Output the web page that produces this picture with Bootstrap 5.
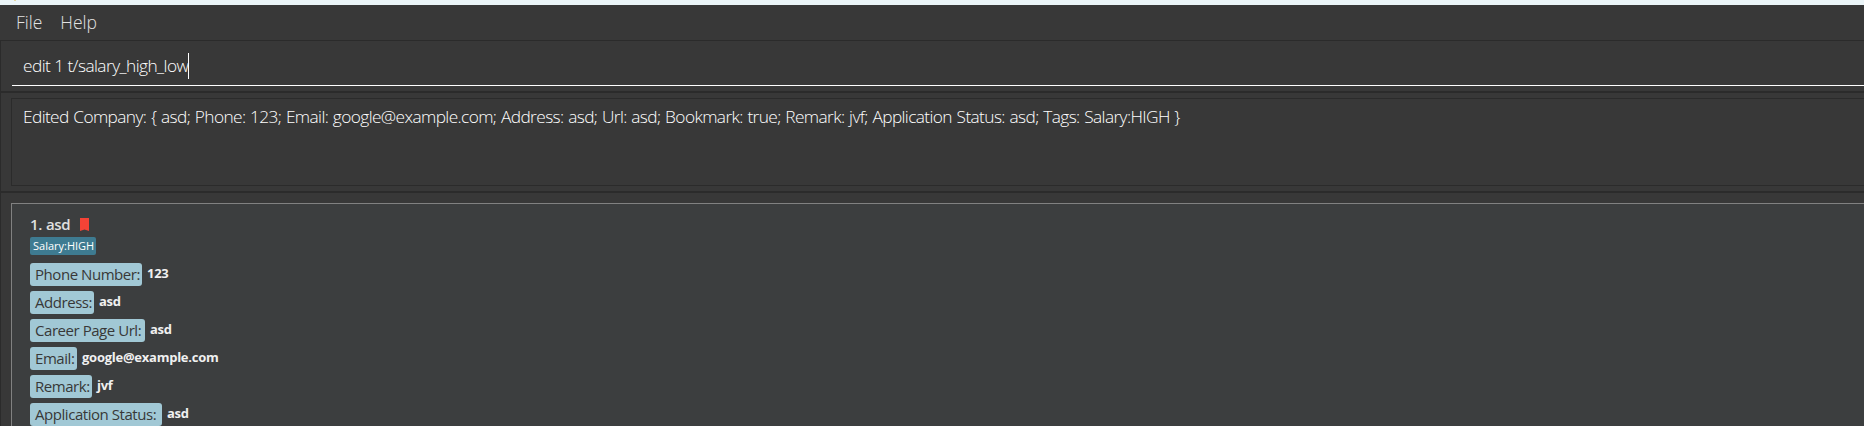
<!DOCTYPE html>
<html lang="en">
<head>
<meta charset="utf-8">
<title>Company Book</title>
<link href="https://cdn.jsdelivr.net/npm/bootstrap@5.3.0/dist/css/bootstrap.min.css" rel="stylesheet">
<style>
body{background:#383838;color:#fff;font-family:"Open Sans","Noto Sans",sans-serif;height:426px}
.strip{height:5px;background:#ebf5f8}
.strip i{width:2px;height:1px;margin-left:14px;background:#e2d6a0}
.menu{height:35px;padding-left:16px;gap:18px;font-size:17.5px;font-weight:300;line-height:35px;color:#e2e2e2}
.panes{border-left:1px solid #2b2b2b;border-top:1px solid #2b2b2b}
.command{height:50px;padding:5px 0 5px 11px}
.field{border-bottom:1px solid #fff;padding-left:11px;font-size:17.3px;font-weight:300;letter-spacing:-.56px}
.caret{width:1px;height:26px;background:#fff}
.result{height:102px;padding:5px 0 6px 10px;border-top:2px solid #2b2b2b;border-bottom:2px solid #2b2b2b}
.message{border:1px solid #2b2b2b;border-right:0;height:88px;padding:6px 0 0 11px;font-size:17.3px;font-weight:300;line-height:24px;letter-spacing:-.6px;word-spacing:.7px}
.list{padding:10px 0 0 10px;height:233px}
.entry{background:#3c3e3f;border:1px solid #818181;border-width:1px 0 0 1px;padding:8px 0 0 18px;height:223px}
.title{height:25px;font-size:15px;font-weight:600;letter-spacing:-.4px;color:#e0e0e0}
.name{width:26px;margin:0 8px 0 5px}
.num{width:11px}
.tag{width:66px;height:18px;border-radius:2px;background:#3e7b91;font-size:11px;font-weight:500;line-height:17px;padding-left:3px;margin-bottom:8px}
.line{height:23px;margin-bottom:5px;gap:5px}
.key{width:var(--w);height:23px;border-radius:3px;background:#a1c8d5;color:#383838;font-size:15px;letter-spacing:-.45px;line-height:22px;padding-left:5px}
.val{font-size:13px;font-weight:700;line-height:21px;letter-spacing:-.25px;color:#f0f0f0}
</style>
<script src="https://cdn.jsdelivr.net/npm/bootstrap@5.3.0/dist/js/bootstrap.bundle.min.js"></script>
</head>
<body class="overflow-hidden">
<div class="strip d-flex"><i></i></div>
<nav class="menu d-flex"><span>File</span><span>Help</span></nav>
<main class="panes">
<section class="command"><div class="field d-flex align-items-center h-100 text-nowrap"><span>edit 1 t/salary_high_low</span><span class="caret"></span></div></section>
<section class="result"><div class="message text-nowrap">Edited Company: { asd; Phone: 123; Email: google@example.com; Address: asd; Url: asd; Bookmark: true; Remark: jvf; Application Status: asd; Tags: Salary:HIGH }</div></section>
<section class="list"><article class="entry text-nowrap">
<div class="title d-flex align-items-center"><span class="num">1.</span><span class="name">asd</span><svg width="9" height="13" viewBox="0 0 9 13"><path fill="#f44336" d="M0 0h9v13L4.500 11.500 0 13z"/></svg></div>
<div class="tag">Salary:HIGH</div>
<div class="line d-flex"><div class="key" style="--w:112px">Phone Number:</div><span class="val">123</span></div>
<div class="line d-flex"><div class="key" style="--w:64px">Address:</div><span class="val">asd</span></div>
<div class="line d-flex"><div class="key" style="--w:115px">Career Page Url:</div><span class="val">asd</span></div>
<div class="line d-flex"><div class="key" style="--w:47px">Email:</div><span class="val">google@example.com</span></div>
<div class="line d-flex"><div class="key" style="--w:62px">Remark:</div><span class="val">jvf</span></div>
<div class="line d-flex"><div class="key" style="--w:132px">Application Status:</div><span class="val">asd</span></div>
</article></section>
</main>
</body>
</html>
